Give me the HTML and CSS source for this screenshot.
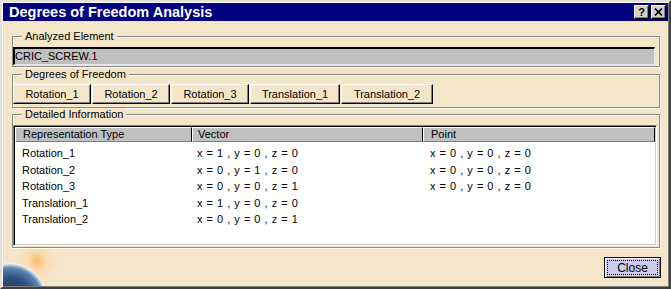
FILE: index.html
```html
<!DOCTYPE html>
<html lang="en">
<head>
    <meta charset="UTF-8">
    <title>Degrees of Freedom Analysis</title>
    <link rel="stylesheet" href="styles.css">
</head>
<body>
    <div class="window">
        <div class="titlebar">
            <span class="title">Degrees of Freedom Analysis</span>
            <div class="title-buttons">
                <span class="tbtn help">?</span>
                <span class="tbtn">
                    <svg width="9" height="8" viewBox="0 0 9 8"><path d="M1 0.5L8 7.5M8 0.5L1 7.5" stroke="#000" stroke-width="1.7" fill="none"/></svg>
                </span>
            </div>
        </div>
        <div class="content">
            <fieldset class="group group-element">
                <legend>Analyzed Element</legend>
                <div class="field">CRIC_SCREW.1</div>
            </fieldset>
            <fieldset class="group group-dof">
                <legend>Degrees of Freedom</legend>
                <div class="dof-buttons">
                    <button class="btn">Rotation_1</button>
                    <button class="btn">Rotation_2</button>
                    <button class="btn">Rotation_3</button>
                    <button class="btn">Translation_1</button>
                    <button class="btn">Translation_2</button>
                </div>
            </fieldset>
            <fieldset class="group group-info">
                <legend>Detailed Information</legend>
                <div class="table">
                    <div class="thead">
                        <div class="th c1">Representation Type</div>
                        <div class="th c2">Vector</div>
                        <div class="th c3">Point</div>
                    </div>
                    <div class="tbody">
                        <div class="row"><span class="c1">Rotation_1</span><span class="c2">x = 1 , y = 0 , z = 0</span><span class="c3">x = 0 , y = 0 , z = 0</span></div>
                        <div class="row"><span class="c1">Rotation_2</span><span class="c2">x = 0 , y = 1 , z = 0</span><span class="c3">x = 0 , y = 0 , z = 0</span></div>
                        <div class="row"><span class="c1">Rotation_3</span><span class="c2">x = 0 , y = 0 , z = 1</span><span class="c3">x = 0 , y = 0 , z = 0</span></div>
                        <div class="row"><span class="c1">Translation_1</span><span class="c2">x = 1 , y = 0 , z = 0</span><span class="c3"></span></div>
                        <div class="row"><span class="c1">Translation_2</span><span class="c2">x = 0 , y = 0 , z = 1</span><span class="c3"></span></div>
                    </div>
                </div>
            </fieldset>
            <div class="footer">
                <button class="close-btn"><span class="focus">Close</span></button>
            </div>
        </div>
    </div>
</body>
</html>
```

FILE: styles.css
```css
body {
    margin: 0;
    padding: 0;
    background: #808080;
    font-family: "Liberation Sans", Arial, sans-serif;
    font-size: 11px;
    color: #000;
}
.window {
    width: 671px;
    height: 289px;
    box-sizing: border-box;
    padding: 1px;
    border: 2px solid;
    border-color: #e4e0d8 #404040 #404040 #e4e0d8;
    box-shadow: inset 1px 1px 0 #fff, inset -1px -1px 0 #808080;
    background: #d4d0c8;
    display: flex;
    flex-direction: column;
}
.titlebar {
    height: 18px;
    background: #000080;
    display: flex;
    align-items: center;
    justify-content: space-between;
    padding: 0 2px 0 6px;
}
.title {
    color: #fff;
    font-weight: bold;
    font-size: 14.5px;
    line-height: 18px;
}
.title-buttons {
    display: flex;
    gap: 2px;
}
.tbtn {
    width: 13px;
    height: 12px;
    background: #d4d0c8;
    border: 1px solid;
    border-color: #fff #000 #000 #fff;
    box-shadow: inset -1px -1px 0 #808080;
    display: flex;
    align-items: center;
    justify-content: center;
}
.tbtn.help {
    font-weight: bold;
    font-size: 11px;
    line-height: 12px;
}
.content {
    flex: 1;
    background-color: #f6e6c9;
    background-image:
        radial-gradient(circle at 7px 279px, #1a3458 0, #2c4f7c 22px, #5c84b0 32px, #b9cde0 35px, #eef2f2 36.5px, rgba(255,255,255,0) 38px),
        radial-gradient(circle at 34px 240px, rgba(255,170,70,0.7) 0, rgba(255,200,130,0.4) 9px, rgba(246,230,201,0) 21px);
    display: flex;
    flex-direction: column;
}
.group {
    margin: 0 8px 0 9px;
    padding: 0 2px 0 0;
    border: 1px solid #8a8a8a;
    box-shadow: 1px 1px 0 #fff, inset 1px 1px 0 #fff;
    min-inline-size: 0;
}
.group legend {
    margin-left: 9px;
    padding: 0 3px;
    line-height: 12px;
    background: #f6e6c9;
}
.group-element {
    margin-top: 9px;
    padding-top: 5px;
    padding-bottom: 1px;
}
.group-dof {
    margin-top: 1px;
    padding-top: 4px;
    padding-bottom: 3px;
}
.group-info {
    margin-top: 0;
    padding-top: 5px;
    padding-bottom: 1px;
}
.field {
    height: 18px;
    box-sizing: border-box;
    margin-right: 2px;
    background: #bfbfbf;
    border: 2px solid;
    border-color: #000 #e8e8e8 #e8e8e8 #000;
    border-width: 2px 1px 1px 2px;
    line-height: 15px;
}
.dof-buttons {
    display: flex;
    gap: 1px;
}
.btn {
    height: 20px;
    padding: 0;
    font-family: inherit;
    font-size: 11px;
    color: #000;
    background: #f6e6c9;
    border: 1px solid;
    border-color: #fff #000 #000 #fff;
    box-shadow: inset -1px -1px 0 #808080;
}
.btn:nth-child(1), .btn:nth-child(2), .btn:nth-child(3) {
    width: 78px;
}
.btn:nth-child(4) {
    width: 90px;
}
.btn:nth-child(5) {
    width: 92px;
}
.table {
    height: 121px;
    box-sizing: border-box;
    background: #fff;
    border: 1px solid;
    border-color: #808080 #fff #fff #808080;
    box-shadow: inset 1px 1px 0 #000, inset -1px -1px 0 #d4d0c8;
    padding: 1px;
}
.thead, .row {
    display: grid;
    grid-template-columns: 177px 231px 1fr;
}
.th {
    height: 15px;
    box-sizing: border-box;
    background: #c0c0c0;
    border: 1px solid;
    border-color: #fff #000 #808080 #fff;
    line-height: 13px;
}
.tbody {
    padding-top: 3px;
}
.row {
    height: 16.5px;
    line-height: 16.5px;
}
.c1 {
    padding-left: 7px;
}
.c2 {
    padding-left: 5px;
    word-spacing: 1px;
}
.c3 {
    padding-left: 7px;
    word-spacing: 1px;
}
.footer {
    display: flex;
    justify-content: flex-end;
    padding: 9px 7px 0 0;
}
.close-btn {
    width: 57px;
    height: 21px;
    padding: 2px;
    font-family: inherit;
    font-size: 12px;
    color: #000;
    background: #cdcdeb;
    border: 1px solid #000;
    box-shadow: inset 1px 1px 0 #fff, inset -1px -1px 0 #808080;
}
.focus {
    display: block;
    height: 100%;
    box-sizing: border-box;
    border: 1px dotted #000;
    line-height: 14px;
}
```
